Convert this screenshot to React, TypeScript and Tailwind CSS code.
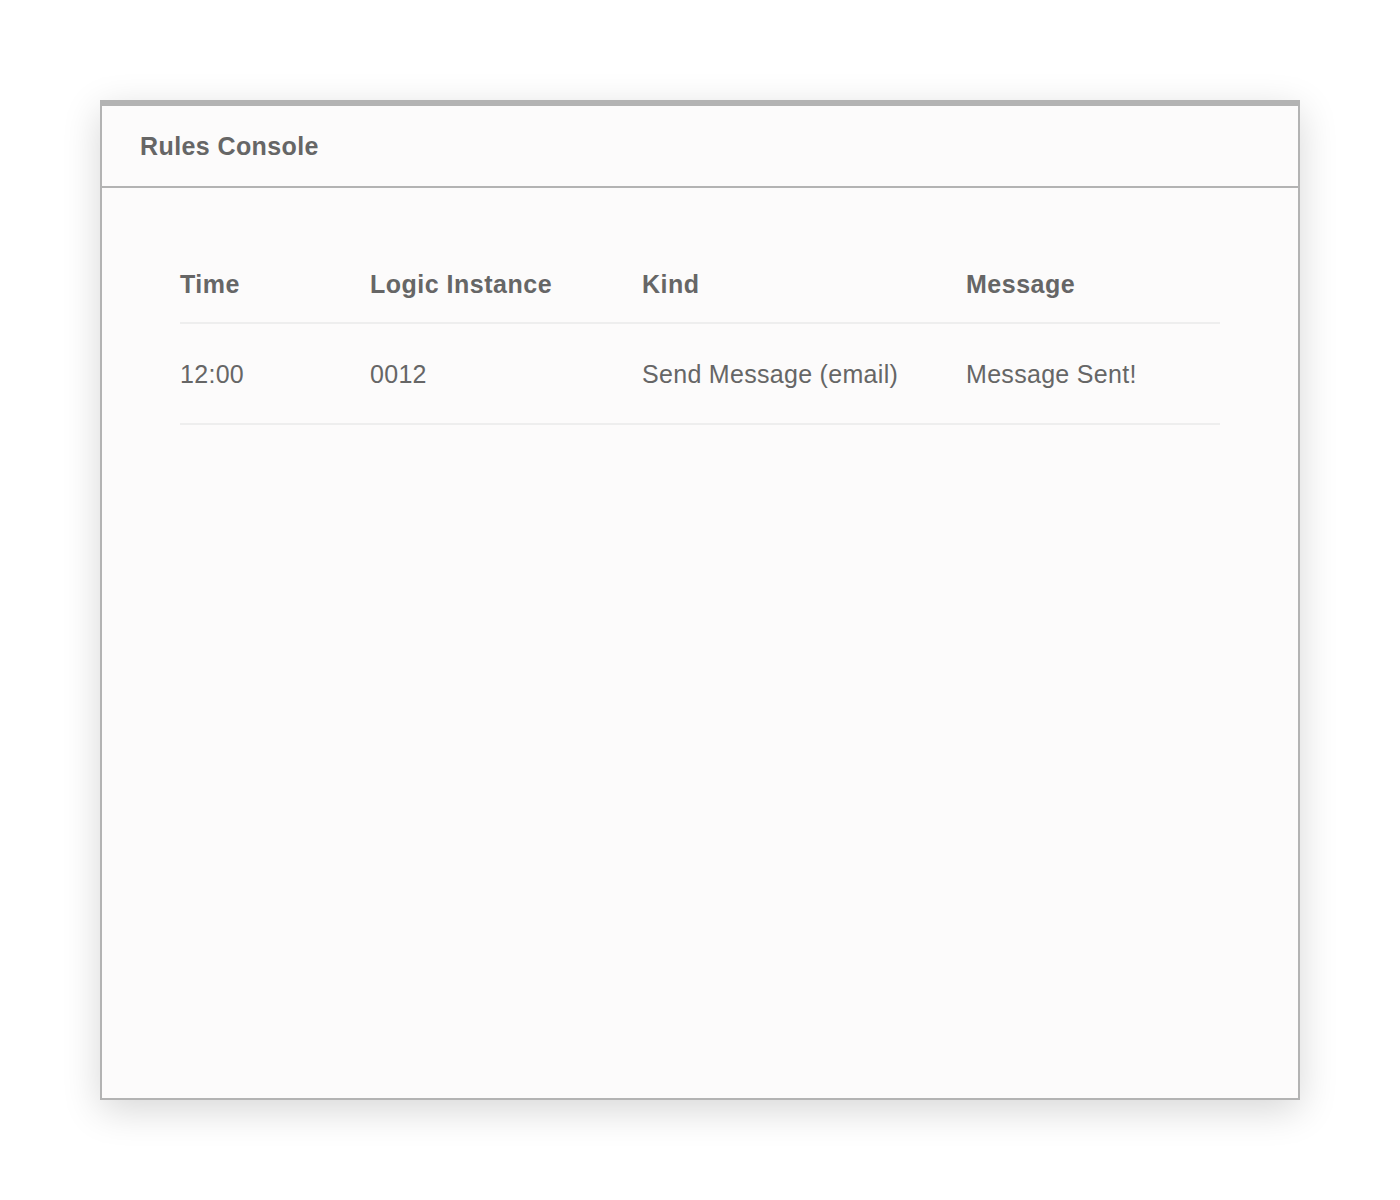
import React from 'react';

interface LogEntry {
  time: string;
  instance: string;
  kind: string;
  message: string;
}

const ENTRIES: LogEntry[] = [
  { time: '12:00', instance: '0012', kind: 'Send Message (email)', message: 'Message Sent!' },
];

const cols = 'grid grid-cols-[190px_272px_324px_1fr] items-center';

export default function App() {
  return (
    <div className="min-h-screen bg-white p-[100px] font-['Liberation_Sans',Arial,sans-serif] text-[#666666]">
      <div className="w-[1200px] h-[1000px] bg-[#fcfbfb] border-2 border-t-[6px] border-[#b3b3b3] shadow-[0_10px_36px_rgba(0,0,0,0.16)] flex flex-col">
        {/* Header */}
        <div className="h-[82px] flex items-center px-[38px] border-b-2 border-[#b3b3b3]">
          <h1 className="text-[25px] leading-none font-bold tracking-[0.4px]">Rules Console</h1>
        </div>

        {/* Tabla */}
        <div className="px-[78px] pt-[60px]">
          <div className={`${cols} h-[76px] pb-[2px] border-b-2 border-[#eeeeee] text-[25px] leading-none font-bold tracking-[0.5px]`}>
            <span>Time</span>
            <span>Logic Instance</span>
            <span>Kind</span>
            <span>Message</span>
          </div>
          {ENTRIES.map((e) => (
            <div key={e.instance} className={`${cols} h-[101px] pt-[2px] border-b-2 border-[#eeeeee] text-[25px] leading-none tracking-[0.3px]`}>
              <span>{e.time}</span>
              <span>{e.instance}</span>
              <span>{e.kind}</span>
              <span>{e.message}</span>
            </div>
          ))}
        </div>
      </div>
    </div>
  );
}
